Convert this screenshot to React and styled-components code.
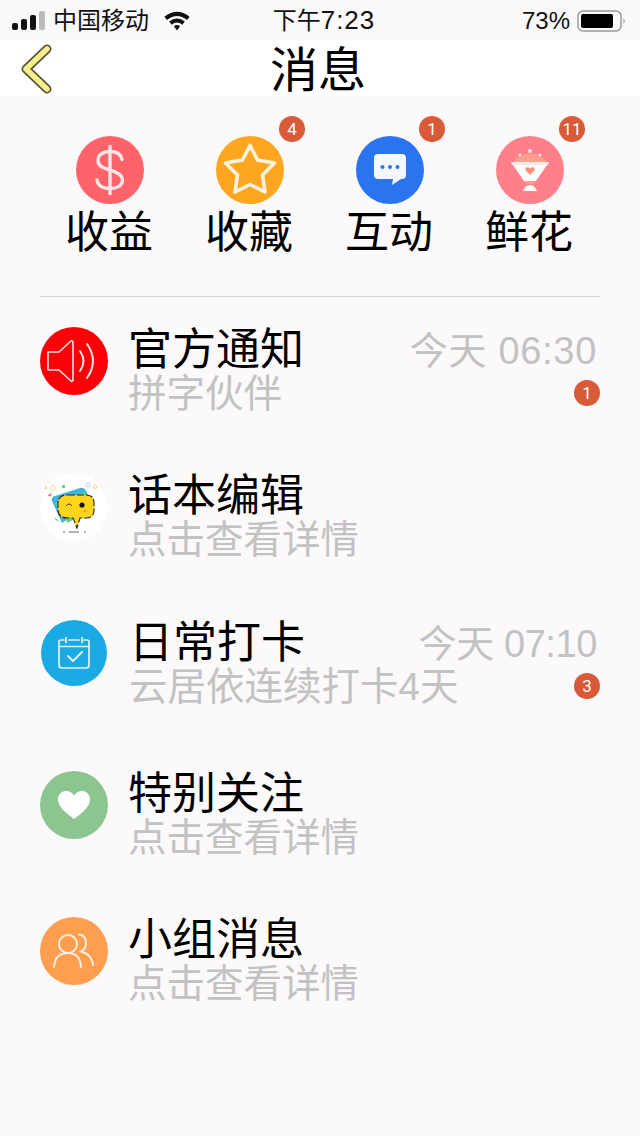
import styled, { createGlobalStyle } from 'styled-components';

const GlobalStyle = createGlobalStyle`
  html, body {
    margin: 0;
    padding: 0;
    background: #fbf9fa;
  }
  body {
    font-family: "Liberation Sans", "Noto Sans CJK SC", sans-serif;
    color: #000;
  }
`;

const Page = styled.div`
  width: 640px;
  height: 1136px;
  overflow: hidden;
  background: #fbf9fa;
`;

// status bar
const StatusBar = styled.div`
  height: 40px;
  display: grid;
  grid-template-columns: 1fr auto 1fr;
  align-items: center;
  padding: 0 13px 0 12px;
  font-size: 24px;
  line-height: 40px;
  color: #111;
`;

const StatusLeft = styled.div`
  display: flex;
  align-items: center;
  gap: 7px;
`;

const StatusRight = styled.div`
  display: flex;
  align-items: center;
  justify-content: flex-end;
  gap: 7px;
`;

const StatusTime = styled.span`
  margin-left: 9px;
`;

const StatusNum = styled.span`
  font-size: 26px;
  letter-spacing: 1px;
`;

const Wifi = styled.svg`
  margin-left: 7px;
`;

// nav bar
const NavBar = styled.div`
  height: 56px;
  background: #fff;
  position: relative;
  display: flex;
  align-items: center;
  justify-content: center;
`;

const NavTitle = styled.h1`
  margin: 0;
  font-size: 48px;
  font-weight: 400;
  line-height: 60px;
  position: relative;
  top: 3px;
  left: -2px;
`;

const BackIcon = styled.svg`
  position: absolute;
  left: 18px;
  top: 4px;
`;

// top shortcuts
const Shortcuts = styled.div`
  display: grid;
  grid-template-columns: repeat(4, 140px);
  margin: 40px 40px 0;
  padding-bottom: 35px;
  border-bottom: 1px solid #d4d2d4;
`;

const Shortcut = styled.div`
  display: flex;
  flex-direction: column;
  align-items: center;
`;

const Circle = styled.div`
  position: relative;
  width: ${({ $size }) => $size || 68}px;
  height: ${({ $size }) => $size || 68}px;
  margin-left: ${({ $inset }) => $inset || 0}px;
  flex: none;
  border-radius: 50%;
  background: ${({ $bg }) => $bg};
  display: flex;
  align-items: center;
  justify-content: center;
`;

const CountBadge = styled.span`
  position: absolute;
  left: 63px;
  top: -20px;
  width: 26px;
  height: 26px;
  border-radius: 50%;
  background: #d85a38;
  color: #fff;
  font-size: 17px;
  line-height: 26px;
  text-align: center;
  font-family: "Roboto", sans-serif;
`;

const ShortcutLabel = styled.div`
  font-size: 44px;
  line-height: 56px;
  margin: 1px 2px 0 0;
  white-space: nowrap;
`;

// message list
const List = styled.div`
  padding: 30px 40px 0;
`;

const Row = styled.div`
  display: flex;
  align-items: flex-start;
  height: ${({ $height }) => $height}px;
`;

const RowText = styled.div`
  flex: 1;
  min-width: 0;
  margin-left: ${({ $indent }) => $indent || 20}px;
  margin-top: -2px;
`;

const RowTitle = styled.div`
  font-size: 44px;
  line-height: 50px;
  white-space: nowrap;
`;

const RowSub = styled.div`
  font-size: 38.5px;
  line-height: 40px;
  margin-top: -1px;
  color: #c2c2c2;
  white-space: nowrap;
`;

const RowMeta = styled.div`
  display: flex;
  flex-direction: column;
  align-items: flex-end;
  margin-top: 2px;
`;

const RowTime = styled.div`
  font-size: 38px;
  line-height: 44px;
  letter-spacing: ${({ $spacing }) => $spacing}px;
  color: #c2c2c2;
  margin-right: 3px;
  white-space: nowrap;
`;

const RowBadge = styled.span`
  margin-top: 7px;
  width: 26px;
  height: 26px;
  border-radius: 50%;
  background: #d85a38;
  color: #fff;
  font-size: 17px;
  line-height: 26px;
  text-align: center;
  font-family: "Roboto", sans-serif;
`;

// icons
const StarIcon = () => (
  <svg width="60" height="56" viewBox="0 0 60 56" fill="none">
    <path
      d="M30 3.5 L37.5 18 L54.5 21 L42.5 33 L45 50 L30 42.5 L15 50 L17.5 33 L5.5 21 L22.5 18 Z"
      stroke="#fdf3df"
      strokeWidth="3.6"
      strokeLinejoin="round"
    />
  </svg>
);

const DollarIcon = () => (
  <svg width="30" height="50" viewBox="0 0 30 50" fill="none" stroke="#fde5e7" strokeWidth="3.4" strokeLinecap="round">
    <path d="M27 14.5 C26 9 21 6.5 15 6.5 C8 6.5 3 10 3 15.5 C3 21 8 23 15 25 C22 27 27.5 29.5 27.5 35 C27.5 40.5 22 43.5 15 43.5 C8 43.5 3 40.5 2 35" />
    <path d="M15 1 V49" />
  </svg>
);

const ChatIcon = () => (
  <svg width="34" height="34" viewBox="0 0 34 34">
    <path d="M5 1 H29 Q33 1 33 5 V22 Q33 26 29 26 H28 L19 32 L20 26 H5 Q1 26 1 22 V5 Q1 1 5 1 Z" fill="#f4f8fe" />
    <circle cx="9.5" cy="14" r="2" fill="#2a74f0" />
    <circle cx="17" cy="14" r="2" fill="#2a74f0" />
    <circle cx="24.5" cy="14" r="2" fill="#2a74f0" />
  </svg>
);

const BouquetIcon = () => (
  <svg width="40" height="44" viewBox="0 0 40 44">
    <circle cx="20" cy="3" r="2" fill="#fde3de" />
    <circle cx="10" cy="7" r="1.6" fill="#fde3de" />
    <circle cx="30" cy="7" r="1.6" fill="#fde3de" />
    <path d="M4 14 Q5 9 11 9 Q15 4 20 6 Q26 4 29 9 Q35 9 36 14 Z" fill="#fba08d" />
    <path d="M1 14 H39 L38 17 H2 Z" fill="#fde9e4" />
    <path d="M3 17 H37 L26 33 H14 Z" fill="#fff" />
    <path d="M20 27 L15.8 22.6 Q14.6 20 17 19.2 Q19 18.8 20 20.6 Q21 18.8 23 19.2 Q25.4 20 24.2 22.6 Z" fill="#fb8f7d" />
    <path d="M14 33 H26 L24 36 H16 Z" fill="#fba08d" />
    <path d="M13 43 Q15 37 20 37 Q25 37 27 43 Z" fill="#fff" />
  </svg>
);

const SpeakerIcon = () => (
  <svg width="56" height="44" viewBox="0 0 56 44" fill="none" stroke="#ffe3e3" strokeWidth="1.6" strokeLinejoin="round" strokeLinecap="round">
    <path d="M2 13 H13 L25 2 Q27 1 27 4 V40 Q27 43 25 42 L13 31 H2 Z" />
    <path d="M34 12 Q41 22 34 32" strokeWidth="2" />
    <path d="M41 5 Q53 22 41 39" strokeWidth="2" />
  </svg>
);

const MascotIcon = () => (
  <svg width="68" height="68" viewBox="0 0 68 68">
    <circle cx="6" cy="15" r="1.2" fill="#f4d96a" />
    <circle cx="13" cy="15" r="2.4" fill="none" stroke="#f4e08a" />
    <rect x="22" y="12" width="3" height="3" fill="#6ccf7a" />
    <circle cx="48" cy="12" r="2" fill="none" stroke="#a8d8f0" />
    <circle cx="55" cy="14" r="2" fill="none" stroke="#f4d96a" />
    <path d="M8 22 L12 20 L10 24 Z" fill="#e8644a" />
    <path d="M12 28 Q11 24 15 23 L40 15 Q44 14 46 18 L52 30 L22 50 Z" fill="#3fb4de" />
    <path d="M15 30 L44 19 L52 34 L28 50 Z" fill="#67cf8a" />
    <path d="M28 22 H46 Q54 22 54 30 V37 Q54 45 46 45 H40 L37 55 L33 45 H28 Q18 45 18 37 V30 Q18 22 28 22 Z" fill="#ffd51c" stroke="#222" strokeWidth="1.1" strokeDasharray="7 2" />
    <path d="M26 33 Q29 29 32 33" fill="none" stroke="#333" strokeWidth="1" />
    <circle cx="42" cy="32" r="2.6" fill="#111" />
    <circle cx="45" cy="38" r="1.5" fill="#f59a4a" />
    <path d="M23 59 H25 M29 59 H39 M44 59 H46" stroke="#666" strokeWidth="1.2" />
    <path d="M15 45 L18 48" stroke="#7cc8e8" strokeWidth="1.2" />
  </svg>
);

const CalendarIcon = () => (
  <svg width="34" height="34" viewBox="0 0 34 34" fill="none" stroke="#dff3fb" strokeWidth="1.7" strokeLinecap="round" strokeLinejoin="round">
    <path d="M7 4 H4 Q2 4 2 6 V29 Q2 32 5 32 H29 Q32 32 32 29 V6 Q32 4 30 4 H27" />
    <path d="M12 4 H22" />
    <path d="M9 1.5 V6.5 M25 1.5 V6.5" />
    <path d="M2 10.5 H32" />
    <path d="M11 20 L16 25 L25 16" strokeWidth="2" />
  </svg>
);

const HeartIcon = () => (
  <svg width="34" height="30" viewBox="0 0 34 30">
    <path d="M17 29 C12 25 1 18 1 9.5 C1 4 5 1 9 1 C12.5 1 15.5 3 17 5.5 C18.5 3 21.5 1 25 1 C29 1 33 4 33 9.5 C33 18 22 25 17 29 Z" fill="#fff" />
  </svg>
);

const PeopleIcon = () => (
  <svg width="42" height="36" viewBox="0 0 42 36" fill="none" stroke="#fff1e2" strokeWidth="1.9" strokeLinecap="round">
    <circle cx="15" cy="11" r="9" />
    <path d="M1 34 Q2 20 15 20 Q27 20 28 34" />
    <path d="M26 1.5 Q33 2 33 10 Q33 16 28 18.5 Q39 21 40 32" />
  </svg>
);

const shortcuts = [
  { label: '收益', bg: '#ff636a', icon: <DollarIcon /> },
  { label: '收藏', bg: '#fea620', icon: <StarIcon />, count: 4 },
  { label: '互动', bg: '#2a74f0', icon: <ChatIcon />, count: 1 },
  { label: '鲜花', bg: '#ff7f8a', icon: <BouquetIcon />, count: 11 },
];

const messages = [
  { title: '官方通知', sub: '拼字伙伴', bg: '#fb0007', icon: <SpeakerIcon />, time: '今天 06:30', spacing: 0.7, count: 1, height: 146 },
  { title: '话本编辑', sub: '点击查看详情', bg: '#fff', icon: <MascotIcon />, height: 147 },
  { title: '日常打卡', sub: '云居依连续打卡4天', bg: '#1aabe4', icon: <CalendarIcon />, time: '今天 07:10', spacing: -0.4, count: 3, height: 151, size: 66, inset: 1, indent: 22 },
  { title: '特别关注', sub: '点击查看详情', bg: '#8cc590', icon: <HeartIcon />, height: 146 },
  { title: '小组消息', sub: '点击查看详情', bg: '#ff9e4e', icon: <PeopleIcon />, height: 146 },
];

const App = () => (
  <Page>
    <GlobalStyle />
    <StatusBar>
      <StatusLeft>
        <svg width="34" height="20" viewBox="0 0 34 20">
          <rect x="0" y="12" width="6" height="7" rx="2" fill="#111" />
          <rect x="9" y="8" width="6" height="11" rx="2" fill="#111" />
          <rect x="18" y="4" width="6" height="15" rx="2" fill="#111" />
          <rect x="27" y="0" width="6" height="19" rx="2" fill="#bbb" />
        </svg>
        <span>中国移动</span>
        <Wifi width="28" height="21" viewBox="0 0 26 20">
          <path d="M1 6.5 Q13 -3 25 6.5 L22.5 9.5 Q13 2 3.5 9.5 Z" fill="#111" />
          <path d="M5.5 11 Q13 5 20.5 11 L18 14 Q13 10 8 14 Z" fill="#111" />
          <path d="M10 15.5 Q13 13 16 15.5 L13 19.5 Z" fill="#111" />
        </Wifi>
      </StatusLeft>
      <StatusTime>
        下午<StatusNum>7:23</StatusNum>
      </StatusTime>
      <StatusRight>
        <span>73%</span>
        <svg width="50" height="22" viewBox="0 0 50 22">
          <rect x="1" y="1" width="43" height="20" rx="5" fill="none" stroke="#999" strokeWidth="1.5" />
          <rect x="4" y="4" width="32" height="14" rx="2" fill="#000" />
          <path d="M46.5 8 Q49 11 46.5 14 Z" fill="#999" />
        </svg>
      </StatusRight>
    </StatusBar>

    <NavBar>
      <BackIcon width="36" height="50" viewBox="0 0 36 50" fill="none">
        <path d="M29 5 L8 25 L29 45" stroke="#55553a" strokeWidth="9" strokeLinecap="round" strokeLinejoin="round" />
        <path d="M29 5 L8 25 L29 45" stroke="#f8ef8a" strokeWidth="5.5" strokeLinecap="round" strokeLinejoin="round" />
      </BackIcon>
      <NavTitle>消息</NavTitle>
    </NavBar>

    <Shortcuts>
      {shortcuts.map((item) => (
        <Shortcut key={item.label}>
          <Circle $bg={item.bg}>
            {item.icon}
            {item.count && <CountBadge>{item.count}</CountBadge>}
          </Circle>
          <ShortcutLabel>{item.label}</ShortcutLabel>
        </Shortcut>
      ))}
    </Shortcuts>

    <List>
      {messages.map((msg) => (
        <Row key={msg.title} $height={msg.height}>
          <Circle $bg={msg.bg} $size={msg.size} $inset={msg.inset}>
            {msg.icon}
          </Circle>
          <RowText $indent={msg.indent}>
            <RowTitle>{msg.title}</RowTitle>
            <RowSub>{msg.sub}</RowSub>
          </RowText>
          {msg.time && (
            <RowMeta>
              <RowTime $spacing={msg.spacing}>{msg.time}</RowTime>
              <RowBadge>{msg.count}</RowBadge>
            </RowMeta>
          )}
        </Row>
      ))}
    </List>
  </Page>
);

export default App;
